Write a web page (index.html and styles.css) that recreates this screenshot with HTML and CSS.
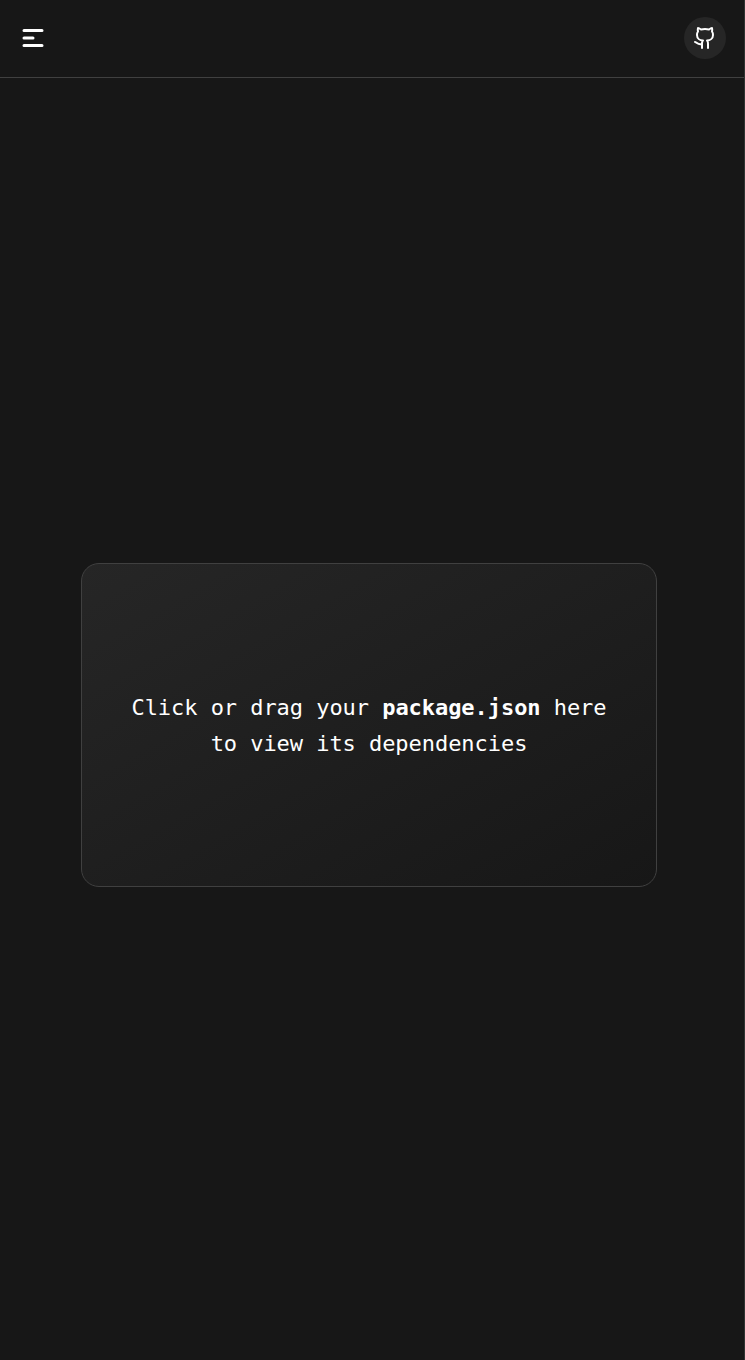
FILE: index.html
```html
<!DOCTYPE html>
<html lang="en">
<head>
<meta charset="utf-8">
<title>Dependencies viewer</title>
<link rel="stylesheet" href="styles.css">
</head>
<body>
<div class="page">
  <header class="header">
    <button class="menu" aria-label="Menu">
      <svg width="22" height="20" viewBox="0 0 22 20" fill="none" stroke="#fff" stroke-width="3" stroke-linecap="round"><path d="M2 2.500h18M2 10h9M2 17.500h18"/></svg>
    </button>
    <a class="github" href="#" aria-label="GitHub">
      <svg width="24" height="24" viewBox="0 0 24 24" fill="none" stroke="#fff" stroke-width="2" stroke-linecap="round" stroke-linejoin="round"><path d="M15 22v-4a4.800 4.800 0 0 0-1-3.500c3 0 6-2 6-5.500.080-1.250-.270-2.480-1-3.500.280-1.150.280-2.350 0-3.500 0 0-1 0-3 1.500-2.640-.500-5.360-.500-8 0C6 2 5 2 5 2c-.300 1.150-.300 2.350 0 3.500A5.403 5.403 0 0 0 4 9c0 3.500 3 5.500 6 5.500-.390.490-.680 1.050-.850 1.650-.170.600-.220 1.230-.150 1.850v4"/><path d="M9 18c-4.510 1.200-4.700-1.700-7-2"/></svg>
    </a>
  </header>
  <main class="main">
    <div class="dropzone">
      <p class="prompt">Click or drag your <strong>package.json</strong> here<br>to view its dependencies</p>
    </div>
  </main>
</div>
</body>
</html>
```
FILE: styles.css
```css
* { box-sizing: border-box; }
body { margin: 0; background: #171717; }
.page {
  display: flex;
  flex-direction: column;
  height: 1360px;
  border-right: 1px solid #303332;
}
.header {
  display: flex;
  align-items: center;
  justify-content: space-between;
  height: 78px;
  padding: 0 18px 2px 22px;
  border-bottom: 1px solid #404040;
}
.menu { display: flex; padding: 0; border: 0; background: none; }
.github {
  display: flex;
  align-items: center;
  justify-content: center;
  width: 42px;
  height: 42px;
  border-radius: 50%;
  background: #262626;
}
.main {
  flex: 1;
  display: flex;
  align-items: center;
  justify-content: center;
  padding: 12px 6px 0 0;
}
.dropzone {
  display: flex;
  align-items: center;
  justify-content: center;
  width: 576px;
  height: 324px;
  padding-top: 2px;
  border: 1px solid #404040;
  border-radius: 18px;
  background: linear-gradient(150deg, #262626, #171717);
}
.prompt {
  margin: 0;
  color: #fff;
  font: 22px/36px "DejaVu Sans Mono", monospace;
  letter-spacing: -0.05px;
  text-align: center;
}
```
